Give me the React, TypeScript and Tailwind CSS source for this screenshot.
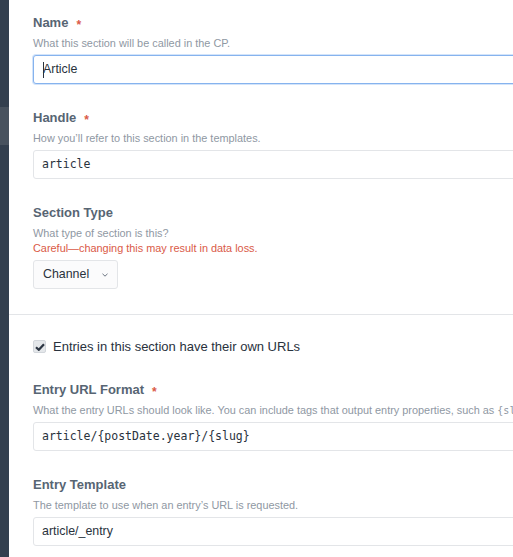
import React from 'react';

const sans = { fontFamily: '"Liberation Sans", Arial, sans-serif' };

// 필드 라벨
const Label = ({ text, required }: { text: string; required?: boolean }) => (
   <div className="flex items-center h-[18px] text-[13px] leading-[18px] font-bold text-[#576573] mb-[4px]">
      <span>{text}</span>
      {required && <span className="ml-[8px] text-[#da5a47] text-[12px] leading-[18px] relative top-[2px]">*</span>}
   </div>
);

const Instructions = ({ children }: { children: React.ReactNode }) => (
   <div className="text-[10.9px] leading-[15px] text-[#8f98a3] whitespace-nowrap">{children}</div>
);

const TextInput = ({
   value,
   mono,
   focused,
}: {
   value: string;
   mono?: boolean;
   focused?: boolean;
}) => (
   <div
      className={
         focused
            ? 'mt-[4px] w-[560px] h-[29px] flex items-center pl-[9px] rounded-[3px] border border-[#86b3ee] shadow-[0_0_0_1px_#d3e4fa] bg-white'
            : 'mt-[4px] w-[560px] h-[29px] flex items-center pl-[8px] rounded-[3px] border border-[#e3e5e8] bg-white'
      }
   >
      {focused && <span className="w-px h-[16px] bg-[#29323d] -mr-px" />}
      <span
         className={mono ? 'text-[11.5px] text-[#29323d]' : 'text-[12.4px] text-[#29323d]'}
         style={mono ? { fontFamily: '"DejaVu Sans Mono", monospace' } : undefined}
      >
         {value}
      </span>
   </div>
);

const Field = ({ children, className = '' }: { children: React.ReactNode; className?: string }) => (
   <div className={'flex flex-col ' + className}>{children}</div>
);

export default function App() {
   return (
      <div className="w-[513px] h-[557px] overflow-hidden bg-white flex" style={sans}>
         <div className="w-[9px] shrink-0 bg-[#333f4e] flex flex-col">
            <div className="h-[107px]" />
            <div className="h-[38px] bg-[#48525e]" />
         </div>

         <div className="flex-1 flex flex-col">
            <div className="pl-[24px] pt-[14px] flex flex-col">
               <Field>
                  <Label text="Name" required />
                  <Instructions>What this section will be called in the CP.</Instructions>
                  <TextInput value="Article" focused />
               </Field>

               <Field className="mt-[25px]">
                  <Label text="Handle" required />
                  <Instructions>How you’ll refer to this section in the templates.</Instructions>
                  <TextInput value="article" mono />
               </Field>

               <Field className="mt-[25px]">
                  <Label text="Section Type" />
                  <Instructions>What type of section is this?</Instructions>
                  <div className="text-[10.9px] leading-[15px] text-[#da5a47] whitespace-nowrap">
                     Careful—changing this may result in data loss.
                  </div>
                  <div className="mt-[4px] w-[85px] h-[29px] flex items-center justify-between pl-[9px] pr-[9px] rounded-[3px] border border-[#e3e5e8] bg-[#fbfbfc]">
                     <span className="text-[12.4px] text-[#29323d]">Channel</span>
                     <svg width="6" height="4" viewBox="0 0 6 4" fill="none">
                        <path d="M0.5 0.8 L3 3.2 L5.5 0.8" stroke="#6b7480" strokeWidth="1" />
                     </svg>
                  </div>
               </Field>
            </div>

            <div className="mt-[25px] h-px bg-[#e3e5e8]" />

            <div className="pl-[24px] pt-[25px] flex flex-col">
               <label className="flex items-center gap-[7px] h-[13px]">
                  <span className="w-[13px] h-[13px] rounded-[2px] bg-[#e4e7ea] border border-[#d2d6db] flex items-center justify-center">
                     <svg width="10" height="8" viewBox="0 0 10 8">
                        <path d="M1 4.2 L3.8 6.8 L9 1.2" stroke="#2c3643" strokeWidth="2.2" fill="none" />
                     </svg>
                  </span>
                  <span className="text-[13px] text-[#29323d]">Entries in this section have their own URLs</span>
               </label>

               <Field className="mt-[28px]">
                  <Label text="Entry URL Format" required />
                  <Instructions>
                     What the entry URLs should look like. You can include tags that output entry properties, such as{' '}
                     <span style={{ fontFamily: '"DejaVu Sans Mono", monospace' }} className="text-[10px]">
                        {'{slug}'}
                     </span>
                  </Instructions>
                  <TextInput value="article/{postDate.year}/{slug}" mono />
               </Field>

               <Field className="mt-[25px]">
                  <Label text="Entry Template" />
                  <Instructions>The template to use when an entry’s URL is requested.</Instructions>
                  <TextInput value="article/_entry" />
               </Field>
            </div>
         </div>
      </div>
   );
}
